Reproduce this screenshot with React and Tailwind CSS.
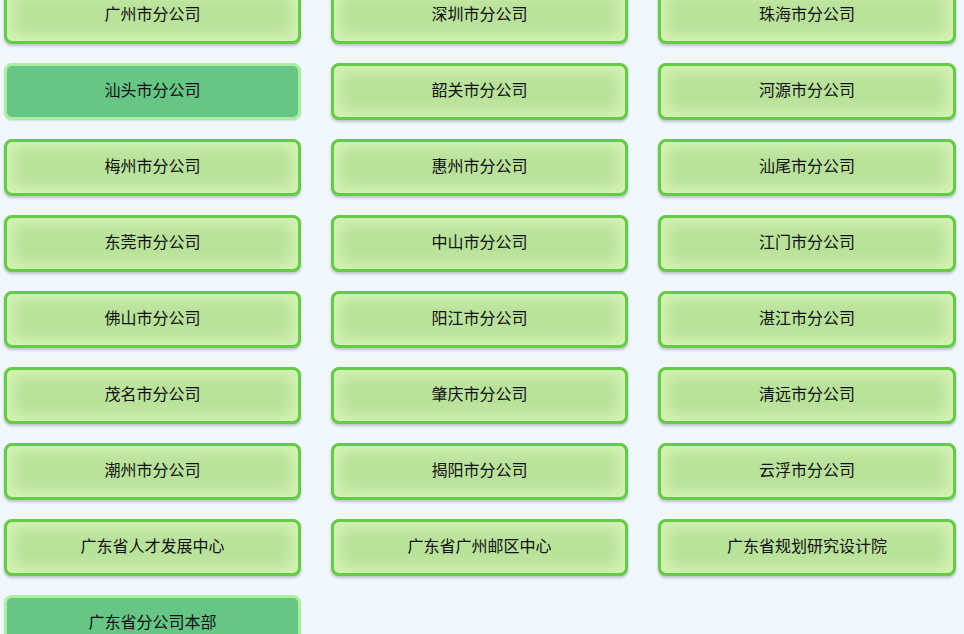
import React from "react";

const items = [
  "广州市分公司", "深圳市分公司", "珠海市分公司",
  "汕头市分公司", "韶关市分公司", "河源市分公司",
  "梅州市分公司", "惠州市分公司", "汕尾市分公司",
  "东莞市分公司", "中山市分公司", "江门市分公司",
  "佛山市分公司", "阳江市分公司", "湛江市分公司",
  "茂名市分公司", "肇庆市分公司", "清远市分公司",
  "潮州市分公司", "揭阳市分公司", "云浮市分公司",
  "广东省人才发展中心", "广东省广州邮区中心", "广东省规划研究设计院",
  "广东省分公司本部",
];

const active = new Set(["汕头市分公司", "广东省分公司本部"]);

export default function App() {
  return (
    <div
      className="w-[964px] h-[634px] overflow-hidden bg-[#f0f7ff]"
      style={{ fontFamily: '"Noto Sans CJK SC", "Noto Sans", sans-serif' }}
    >
      <div className="mt-[-13px] pl-[4px] grid grid-cols-[297px_297px_298px] gap-x-[30px] gap-y-[19px]">
        {items.map((t) =>
          active.has(t) ? (
            <div
              key={t}
              className="h-[57px] pb-[5px] rounded-[8px] border-[3px] border-[#aaf09c] bg-[#66c685] flex items-center justify-center text-[16px] leading-none text-[#111] shadow-[0_1px_2px_rgba(0,0,0,0.12)]"
            >
              {t}
            </div>
          ) : (
            <div
              key={t}
              className="h-[57px] pb-[5px] rounded-[8px] border-[3px] border-[#62cc42] bg-[#b9e29a] shadow-[inset_0_0_14px_6px_#d6f3b6,0_2px_3px_rgba(0,0,0,0.22)] flex items-center justify-center text-[16px] leading-none text-[#111]"
            >
              {t}
            </div>
          )
        )}
      </div>
    </div>
  );
}
